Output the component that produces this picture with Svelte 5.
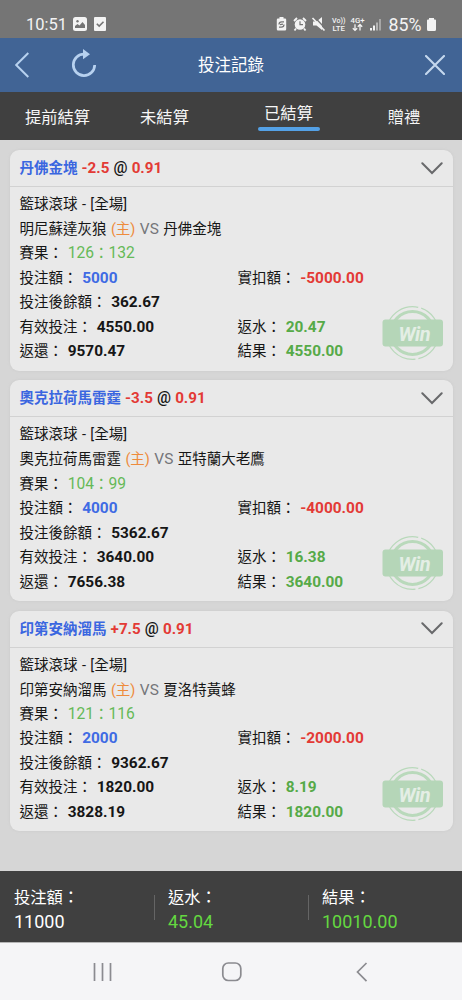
<script>
  const tabs = ['提前結算', '未結算', '已結算', '贈禮'];
  const active = 2;
  const bets = [
    { pick: '丹佛金塊', line: '-2.5', home: '明尼蘇達灰狼', away: '丹佛金塊', score: ['126', '132'], stake: '5000', debit: '-5000.00', balance: '362.67', valid: '4550.00', rebate: '20.47', back: '9570.47', result: '4550.00' },
    { pick: '奧克拉荷馬雷霆', line: '-3.5', home: '奧克拉荷馬雷霆', away: '亞特蘭大老鷹', score: ['104', '99'], stake: '4000', debit: '-4000.00', balance: '5362.67', valid: '3640.00', rebate: '16.38', back: '7656.38', result: '3640.00' },
    { pick: '印第安納溜馬', line: '+7.5', home: '印第安納溜馬', away: '夏洛特黃蜂', score: ['121', '116'], stake: '2000', debit: '-2000.00', balance: '9362.67', valid: '1820.00', rebate: '8.19', back: '3828.19', result: '1820.00' }
  ];
  const totals = [
    { label: '投注額：', value: '11000', green: false },
    { label: '返水：', value: '45.04', green: true },
    { label: '結果：', value: '10010.00', green: true }
  ];
</script>

<div class="screen">
  <div class="status">
    <div class="left">
      <span class="clock">10:51</span>
      <svg width="14" height="14" viewBox="0 0 14 14"><rect width="14" height="14" rx="2.5" fill="#f3f3f3" /><circle cx="4.5" cy="4.3" r="1.2" fill="#747474" /><path d="M2 11V9l2.5-2 2 1.5L9.5 5 12 8v3z" fill="#747474" /></svg>
      <svg class="check" width="12" height="14" viewBox="0 0 12 14"><rect width="12" height="14" rx="1" fill="#f3f3f3" /><path d="M2.8 6.7l2.4 2.4 4.3-4.3" fill="none" stroke="#747474" stroke-width="1.6" /></svg>
    </div>
    <svg class="indicators" width="107" height="18" viewBox="0 0 107 18">
      <g fill="#f3f3f3">
        <path d="M4.500 2h4v1.500h1.500q1.200 0 1.200 1.200v9.600q0 1.200-1.200 1.200h-7q-1.200 0-1.200-1.200V4.700q0-1.200 1.200-1.200h1.500z" />
        <path d="M4 9.500q0-2.700 2.700-2.700h2.300M9 9.500q0 2.700-2.700 2.700H4M5 9.700l3-.5" fill="none" stroke="#747474" stroke-width="1.200" />
        <circle cx="25" cy="9.500" r="5.300" />
        <path d="M19 6l3-3M31 6l-3-3M21 13.500l-1.500 2M29 13.500l1.500 2" stroke="#f3f3f3" stroke-width="1.800" />
        <path d="M25 6.300v3.400h3" fill="none" stroke="#747474" stroke-width="1.200" />
        <path d="M38 6.500h3.500l5.500-4.500v13l-5.500-4.500H38z" />
        <path d="M39 1.500l12 12.800" stroke="#747474" stroke-width="1.300" />
        <path d="M37.500 3l12 12.500" stroke="#f3f3f3" stroke-width="1.700" />
        <text x="57" y="8" font-size="7.600" font-weight="500" textLength="13.500" lengthAdjust="spacingAndGlyphs">Vo))</text>
        <text x="57.500" y="15.800" font-size="8" font-weight="500" textLength="12.500" lengthAdjust="spacingAndGlyphs">LTE</text>
        <text x="75.500" y="8" font-size="8" font-weight="500" textLength="14" lengthAdjust="spacingAndGlyphs">4G+</text>
        <path d="M80 9.300v6m-2.200-2.100l2.200 2.200 2.200-2.200M85 15.600v-6m-2.200 2.100l2.200-2.200 2.200 2.200" fill="none" stroke="#f3f3f3" stroke-width="1.300" />
        <rect x="95" y="13" width="2" height="2.500" /><rect x="98" y="10.500" width="2" height="5" />
        <rect x="101" y="7.500" width="2" height="8" opacity=".5" /><rect x="104" y="4" width="2" height="11.500" opacity=".4" />
      </g>
    </svg>
    <span class="percent">85%</span>
    <svg class="battery" width="9" height="13" viewBox="0 0 9 13"><path d="M2 0h5v1.500h1q1 0 1 1V11.500q0 1.500-1.500 1.500h-6Q0 13 0 11.500v-9q0-1 1-1h1z" fill="#f3f3f3" /></svg>
  </div>

  <header>
    <svg class="back" width="14" height="26" viewBox="0 0 14 26"><path d="M13.300 1L1.200 13l12.100 12" fill="none" stroke="#b7d1ef" stroke-width="2" /></svg>
    <svg class="refresh" width="28" height="30" viewBox="0 0 28 30" fill="none"><path d="M14.500 5.200A10.700 10.700 0 1 0 24.700 16" stroke="#b7d1ef" stroke-width="2.700" /><path d="M13 0l7 5.200-7 5z" fill="#b7d1ef" /></svg>
    <h1>投注記錄</h1>
    <svg class="close" width="20" height="20" viewBox="0 0 20 20"><path d="M1 1l18 18M19 1L1 19" stroke="#c5d8ee" stroke-width="2.100" stroke-linecap="round" /></svg>
  </header>

  <nav>
    {#each tabs as tab, i}
      <div class="tab" class:active={i === active}><span>{tab}</span></div>
    {/each}
  </nav>

  <main>
    {#each bets as b}
      <section class="card">
        <div class="head">
          <div><span class="pick">{b.pick}</span> <b class="red">{b.line}</b> <span class="at">@</span> <b class="red">0.91</b></div>
          <svg width="22" height="13" viewBox="0 0 22 13"><path d="M1.3 1.3L11 11l9.700-9.700" fill="none" stroke="#68696b" stroke-width="2" stroke-linecap="round" /></svg>
        </div>
        <div class="body">
          <div class="row">籃球滾球 - [全場]</div>
          <div class="row">{b.home} <span class="orange">(主)</span> <span class="vs">VS</span> {b.away}</div>
          <div class="row">賽果： <span class="score">{b.score[0]}<i>：</i>{b.score[1]}</span></div>
          <div class="row pair"><div>投注額： <b class="blue">{b.stake}</b></div><div>實扣額： <b class="red">{b.debit}</b></div></div>
          <div class="row">投注後餘額： <b>{b.balance}</b></div>
          <div class="row pair"><div>有效投注： <b>{b.valid}</b></div><div>返水： <b class="green">{b.rebate}</b></div></div>
          <div class="row pair"><div>返還： <b>{b.back}</b></div><div>結果： <b class="green">{b.result}</b></div></div>
        </div>
        <svg class="stamp" width="62" height="56" viewBox="0 0 62 56">
          <g fill="none" stroke="#b9d9bb">
            <circle cx="30.500" cy="28" r="26.300" stroke-width="1.200" stroke-dasharray="35 3 52 4" />
            <circle cx="30.500" cy="28" r="21.500" stroke-width="3.200" />
          </g>
          <rect x=".5" y="14.500" width="60.500" height="27" rx="3" fill="#b5d6b8" />
          <text x="32.500" y="35.500" text-anchor="middle" font-size="20" font-weight="700" font-style="italic" fill="#e4eee5" textLength="32">Win</text>
        </svg>
      </section>
    {/each}
  </main>

  <footer>
    {#each totals as t}
      <div class="total"><span>{t.label}</span><span class="num" class:lime={t.green}>{t.value}</span></div>
    {/each}
  </footer>

  <div class="keys">
    <svg width="462" height="58" viewBox="0 0 462 58" fill="none" stroke="#8b8b90" stroke-width="1.700">
      <path d="M94.500 20v18M102.500 20v18M110.500 20v18" />
      <rect x="222.800" y="20" width="18" height="17.500" rx="5.500" />
      <path d="M366.500 20L357.500 29l9 9.200" />
    </svg>
  </div>
</div>

<style>
  :global(body) { margin: 0; }
  .screen { width: 462px; height: 1000px; display: flex; flex-direction: column; overflow: hidden; background: #d6d6d6; font-family: Roboto, "Noto Sans CJK TC", sans-serif; color: #161616; }
  svg { display: block; flex: none; }
  .status { height: 38px; flex: none; box-sizing: border-box; background: #757575; color: #f3f3f3; display: flex; align-items: center; padding: 10px 26px 0 26px; }
  .left { display: flex; align-items: center; width: 249px; flex: none; }
  .clock { font-size: 16.500px; width: 47px; white-space: nowrap; }
  .check { margin-left: 7px; }
  .percent { font-size: 17.800px; margin-left: 6.500px; width: 37.500px; flex: none; white-space: nowrap; }
  .battery { margin-left: 1px; }
  header { height: 54px; flex: none; display: flex; align-items: center; background: #416495; color: #fff; }
  .back { margin-left: 15px; }
  .refresh { margin: -3px 0 0 41px; }
  h1 { margin: 2px 0 0 100px; font-size: 16.500px; font-weight: 400; line-height: 24px; width: 227px; flex: none; }
  nav { height: 48px; flex: none; background: #404040; display: grid; grid-template-columns: 115px 99px 149px 1fr; color: #f6f6f6; font-size: 16.300px; line-height: 24px; }
  .tab { display: flex; justify-content: center; padding-top: 14px; }
  .tab:nth-child(4) { padding-right: 17px; }
  .active { padding-top: 10px; }
  .active span { height: 25px; width: 62px; text-align: center; position: relative; }
  .active span::after { content: ""; position: absolute; left: 0; right: 0; top: 25px; height: 4px; border-radius: 2px; background: #54a1e6; }
  main { height: 731px; flex: none; box-sizing: border-box; padding: 10px 9.500px; display: flex; flex-direction: column; gap: 9.600px; }
  .card { height: 220.700px; flex: none; border-radius: 9px; background: #e9e9e9; position: relative; box-shadow: 0 0 3px #cacaca; }
  .head { height: 36px; border-bottom: 1px solid #d2d2d2; display: flex; align-items: center; justify-content: space-between; padding: 0 10px; font-size: 14.500px; white-space: nowrap; word-spacing: .5px; }
  .head > div { margin-top: -3px; }
  .pick { font-weight: 700; color: #3a66e0; }
  .head b { font-size: 15.200px; }
  .at { font-size: 15.600px; font-weight: 500; }
  .body { padding: 5.600px 10px 0; font-size: 14.500px; word-spacing: .8px; }
  .row { height: 24.450px; line-height: 24.450px; white-space: nowrap; }
  .row:first-child { position: relative; top: .5px; }
  .pair { display: grid; grid-template-columns: 218px 1fr; }
  b { font-size: 15.400px; font-weight: 700; }
  .body b, .score { margin-left: .3px; }
  .red { color: #e33a35; }
  .blue { color: #3f6be4; }
  .green { color: #56aa48; }
  .orange { color: #ee8b3c; }
  .vs { color: #75767a; font-size: 15.400px; }
  .score { color: #65b957; font-size: 15.600px; }
  .score i { font-style: normal; font-size: 14.500px; }
  .stamp { position: absolute; right: 9px; bottom: 9.500px; }
  footer { height: 71px; flex: none; background: #404040; color: #fff; display: grid; grid-template-columns: 154px 154px 154px; border-bottom: 1px solid #b5b5b5; }
  .total { position: relative; padding: 15px 0 0 14px; display: flex; flex-direction: column; font-size: 16.300px; line-height: 24px; }
  .total + .total::before { content: ""; position: absolute; left: 0; top: 24px; width: 1px; height: 25px; background: #656565; }
  .num { font-size: 18px; }
  .lime { color: #64d840; }
  .keys { flex: 1; background: #f5f5f7; }
</style>
